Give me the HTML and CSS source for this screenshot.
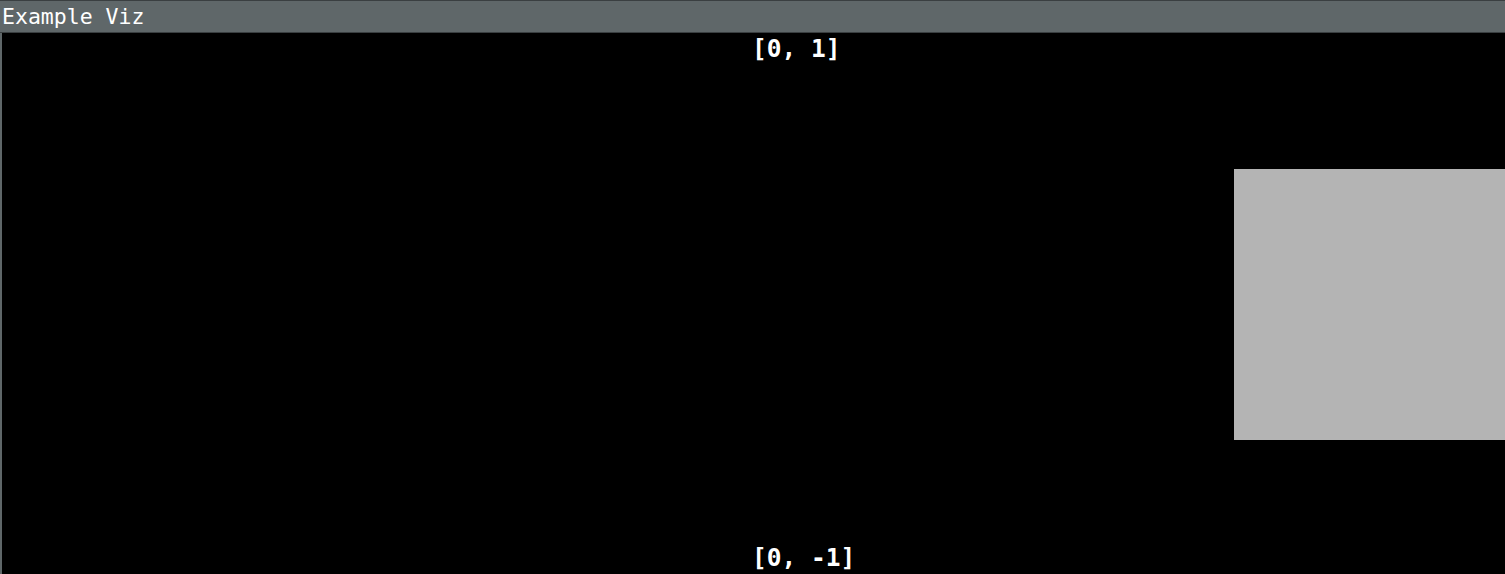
FILE: index.html
```html
<!DOCTYPE html>
<html>
<head>
<meta charset="utf-8">
<link rel="stylesheet" href="styles.css">
</head>
<body>
<div class="window">
  <div class="titlebar">Example Viz</div>
  <div class="canvas">
    <div class="label label-top">[0, 1]</div>
    <div class="rect"></div>
    <div class="label label-bottom">[0, -1]</div>
  </div>
</div>
</body>
</html>
```
FILE: styles.css
```css
html, body {
  margin: 0;
  padding: 0;
  background: #000;
  width: 1505px;
  height: 574px;
  overflow: hidden;
}
.window {
  display: flex;
  flex-direction: column;
  height: 574px;
  border-top: 1px solid #3a3f41;
  box-sizing: border-box;
}
.titlebar {
  height: 31px;
  background: #5f6769;
  color: #fff;
  font-family: "DejaVu Sans Mono", monospace;
  font-size: 21.5px;
  line-height: 31px;
  padding-left: 2px;
  border-bottom: 1px solid #3a3f41;
  box-sizing: content-box;
}
.canvas {
  position: relative;
  flex: 1;
  background: #000;
  border-left: 2px solid #5f6769;
}
.label {
  position: absolute;
  left: 750px;
  color: #fff;
  font-family: "DejaVu Sans Mono", monospace;
  font-weight: bold;
  font-size: 24.5px;
  line-height: 30px;
  white-space: pre;
}
.label-top { top: 1px; }
.label-bottom { top: 510px; }
.rect {
  position: absolute;
  left: 1232px;
  top: 136px;
  width: 271px;
  height: 271px;
  background: #b4b4b4;
}
```
